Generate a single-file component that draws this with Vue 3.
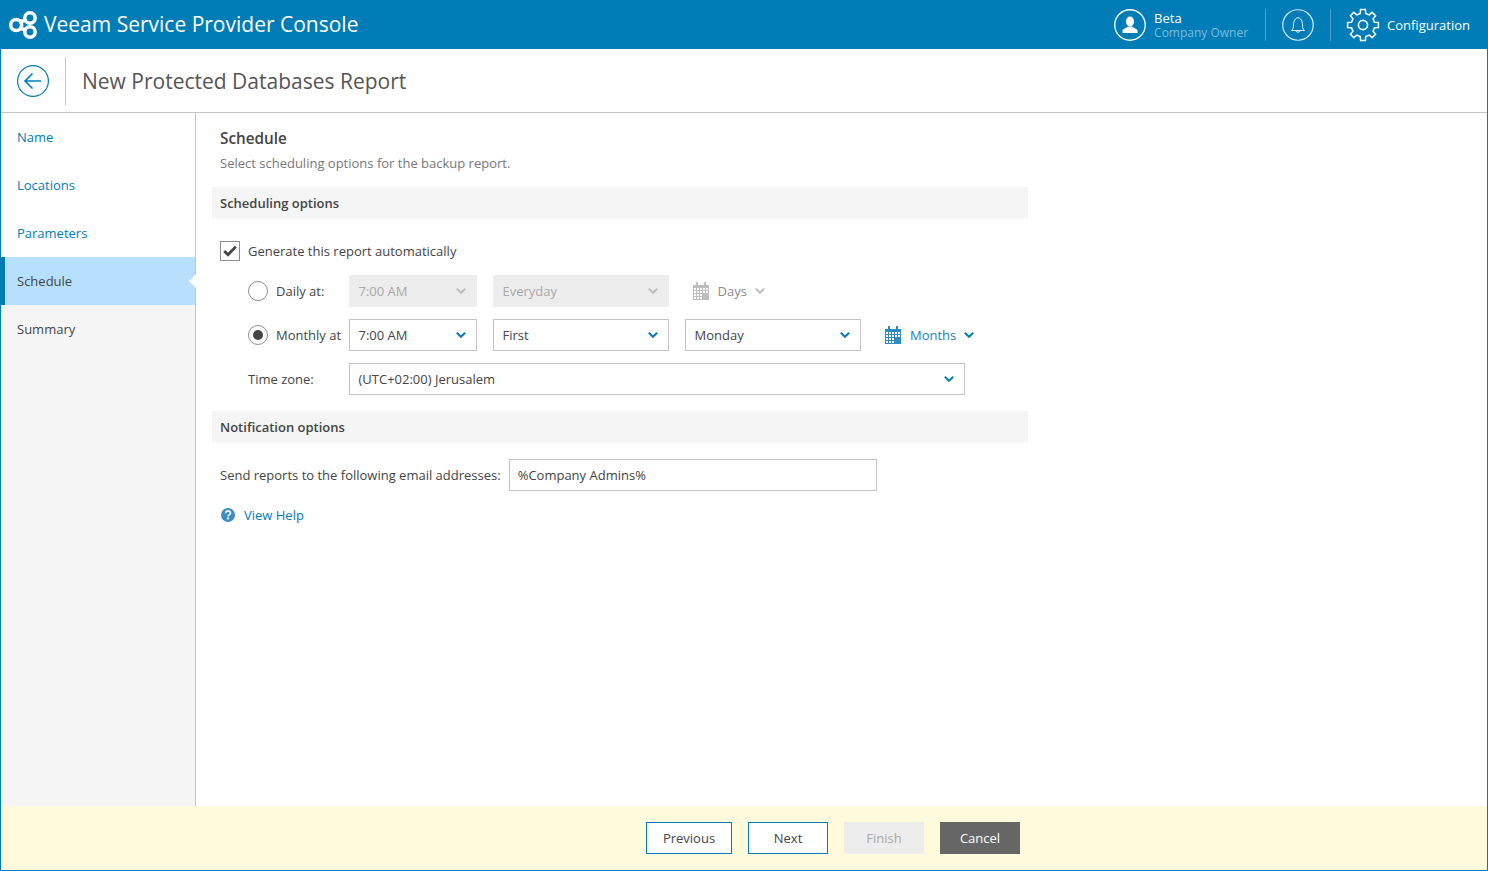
<script setup>
const navItems = [
  { label: 'Name', state: 'link' },
  { label: 'Locations', state: 'link' },
  { label: 'Parameters', state: 'link' },
  { label: 'Schedule', state: 'active' },
  { label: 'Summary', state: 'plain' }
]

function gearPath() {
  const cx = 17, cy = 17, teeth = 8
  const pts = []
  for (let i = 0; i < teeth; i++) {
    const a = (i / teeth) * Math.PI * 2 - Math.PI / 2
    const step = (Math.PI * 2) / teeth
    const list = [
      [11.8, a - step * 0.30],
      [15.6, a - step * 0.20],
      [15.6, a + step * 0.20],
      [11.8, a + step * 0.30]
    ]
    list.forEach(([r, t]) => pts.push(`${(cx + r * Math.cos(t)).toFixed(2)} ${(cy + r * Math.sin(t)).toFixed(2)}`))
  }
  return 'M' + pts.join('L') + 'Z'
}
const gear = gearPath()

const calCells = []
for (let r = 0; r < 4; r++) {
  for (let c = 0; c < 5; c++) calCells.push({ x: 1 + c * 3, y: 6 + r * 3 })
}
</script>

<template>
  <div class="app">
    <header class="topbar">
      <div class="brand">
        <svg class="logo" width="30" height="30" viewBox="0 0 30 30" fill="none" stroke="#fff" stroke-width="3.5">
          <path d="M11 12 L18 10 M11 18 L18 20" stroke-width="3.4" />
          <circle cx="8.2" cy="15" r="5.5" />
          <circle cx="22" cy="8" r="5.2" />
          <circle cx="22" cy="22" r="5.2" />
        </svg>
        <span class="brand-name">Veeam Service Provider Console</span>
      </div>
      <div class="top-actions">
        <svg class="round-ico" width="32" height="32" viewBox="0 0 32 32">
          <circle cx="16" cy="16" r="15.25" fill="none" stroke="#fff" stroke-width="1.3" />
          <ellipse cx="16" cy="12.5" rx="4" ry="5" fill="#fff" />
          <path d="M8.5 24 v-2.2 c0 -2 4 -2.8 5.5 -4.3 h4 c1.5 1.5 5.5 2.3 5.5 4.3 V24 Z" fill="#fff" />
        </svg>
        <div class="user">
          <div class="user-name">Beta</div>
          <div class="user-role">Company Owner</div>
        </div>
        <div class="top-div top-div-a"></div>
        <svg class="round-ico" width="32" height="32" viewBox="0 0 32 32" fill="none" stroke="#fff">
          <circle cx="16" cy="16" r="15.25" stroke-width="1.2" stroke-opacity=".85" />
          <path d="M9.5 21.5 c1.6 -1.5 2 -3 2 -5.5 c0 -4 1.8 -7.2 4.5 -7.2 s4.5 3.2 4.5 7.2 c0 2.5 .4 4 2 5.5 Z" stroke-width="1" stroke-opacity=".9" />
          <path d="M14 22 c.3 1.6 3.7 1.6 4 0" stroke-width="1" stroke-opacity=".9" />
        </svg>
        <div class="top-div top-div-b"></div>
        <svg class="gear" width="34" height="34" viewBox="0 0 34 34" fill="none" stroke="#fff" stroke-width="1.5">
          <path :d="gear" stroke-linejoin="miter" />
          <circle cx="17" cy="17" r="4.6" stroke-width="1.6" />
        </svg>
        <span class="config">Configuration</span>
      </div>
    </header>

    <div class="titlebar">
      <svg width="32" height="32" viewBox="0 0 32 32" fill="none" stroke="#007cb7">
        <circle cx="16" cy="16" r="15.4" stroke-width="1.2" />
        <path d="M8 16 H24 M15.5 8.5 L8 16 L15.5 23.5" stroke-width="1.6" />
      </svg>
      <div class="title-div"></div>
      <h1 class="title">New Protected Databases Report</h1>
    </div>

    <div class="body">
      <nav class="side">
        <div v-for="item in navItems" :key="item.label" class="side-item" :class="item.state">{{ item.label }}</div>
      </nav>

      <main class="main">
        <div class="intro">
          <h2 class="h">Schedule</h2>
          <p class="sub">Select scheduling options for the backup report.</p>
        </div>

        <div class="band">Scheduling options</div>

        <div class="sched">
          <label class="check-row">
            <span class="checkbox">
              <svg width="14" height="12" viewBox="0 0 14 12" fill="none" stroke="#444" stroke-width="2.8"><path d="M1.2 6 L5 9.8 L12.8 1.6" /></svg>
            </span>
            Generate this report automatically
          </label>

          <div class="row">
            <div class="radio-wrap"><span class="radio"></span><span class="lbl">Daily at:</span></div>
            <div class="sel w128 disabled"><span>7:00 AM</span><svg class="chev" width="10" height="6" viewBox="0 0 10 6"><path d="M.8 .8 L5 4.8 L9.2 .8" /></svg></div>
            <div class="sel w176 disabled"><span>Everyday</span><svg class="chev" width="10" height="6" viewBox="0 0 10 6"><path d="M.8 .8 L5 4.8 L9.2 .8" /></svg></div>
            <div class="period off">
              <svg class="cal" width="16" height="18" viewBox="0 0 16 18">
                <path d="M3 0h2v4H3zM11 0h2v4h-2z" /><rect y="3" width="16" height="15" class="cal-bg" />
                <rect v-for="(c, i) in calCells" :key="i" :x="c.x" :y="c.y" width="2" height="2" fill="#fff" />
                <rect x="10" y="12" width="6" height="6" />
              </svg>
              <span>Days</span>
              <svg class="chev" width="10" height="6" viewBox="0 0 10 6"><path d="M.8 .8 L5 4.8 L9.2 .8" /></svg>
            </div>
          </div>

          <div class="row">
            <div class="radio-wrap"><span class="radio on"></span><span class="lbl">Monthly at</span></div>
            <div class="sel w128"><span>7:00 AM</span><svg class="chev" width="10" height="6" viewBox="0 0 10 6"><path d="M.8 .8 L5 4.8 L9.2 .8" /></svg></div>
            <div class="sel w176"><span>First</span><svg class="chev" width="10" height="6" viewBox="0 0 10 6"><path d="M.8 .8 L5 4.8 L9.2 .8" /></svg></div>
            <div class="sel w176"><span>Monday</span><svg class="chev" width="10" height="6" viewBox="0 0 10 6"><path d="M.8 .8 L5 4.8 L9.2 .8" /></svg></div>
            <div class="period">
              <svg class="cal" width="16" height="18" viewBox="0 0 16 18">
                <path d="M3 0h2v4H3zM11 0h2v4h-2z" /><rect y="3" width="16" height="15" class="cal-bg" />
                <rect v-for="(c, i) in calCells" :key="i" :x="c.x" :y="c.y" width="2" height="2" fill="#fff" />
                <rect x="10" y="12" width="6" height="6" />
              </svg>
              <span>Months</span>
              <svg class="chev" width="10" height="6" viewBox="0 0 10 6"><path d="M.8 .8 L5 4.8 L9.2 .8" /></svg>
            </div>
          </div>

          <div class="row">
            <div class="tz-lbl">Time zone:</div>
            <div class="sel w616"><span>(UTC+02:00) Jerusalem</span><svg class="chev" width="10" height="6" viewBox="0 0 10 6"><path d="M.8 .8 L5 4.8 L9.2 .8" /></svg></div>
          </div>
        </div>

        <div class="band">Notification options</div>

        <div class="mail-row">
          <span>Send reports to the following email addresses:</span>
          <div class="inp">%Company Admins%</div>
        </div>

        <div class="help">
          <svg width="16" height="16" viewBox="0 0 16 16">
            <circle cx="8" cy="8" r="7" fill="#3d8fc0" />
            <path d="M5.6 6.2 c0 -3 4.9 -3 4.9 -.2 c0 1.7 -2.4 1.7 -2.4 3.4" fill="none" stroke="#fff" stroke-width="1.6" />
            <rect x="7.1" y="10.5" width="1.9" height="1.9" fill="#fff" />
          </svg>
          <span>View Help</span>
        </div>
      </main>
    </div>

    <footer class="foot">
      <button class="btn">Previous</button>
      <button class="btn w80">Next</button>
      <button class="btn w80 dis">Finish</button>
      <button class="btn w80 dark">Cancel</button>
    </footer>
  </div>
</template>

<style>
html, body { margin: 0; padding: 0; background: #fff; }
</style>

<style scoped>
* { box-sizing: border-box; }
.app {
  width: 1488px; height: 871px; display: flex; flex-direction: column;
  font-family: "Open Sans", "Liberation Sans", sans-serif; font-size: 13px; color: #444;
  border-left: 1px solid #007cb7; border-right: 1px solid #007cb7; border-bottom: 1px solid #007cb7;
  overflow: hidden;
}
.topbar {
  height: 49px; background: #007cb7; color: #fff; display: flex; align-items: center; justify-content: space-between;
  margin: 0 -1px; padding: 0 18px 0 8px; flex: none;
}
.brand { display: flex; align-items: center; }
.logo { margin-right: 6px; margin-top: 1px; }
.brand-name { font-size: 21px; line-height: 30px; margin-bottom: 2px; }
.top-actions { display: flex; align-items: center; height: 100%; }
.round-ico { display: block; }
.user { margin-left: 8px; width: 111px; font-size: 13px; padding-top: 2px; }
.user-name { color: #fff; line-height: 15px; }
.user-role { color: #7fbadb; font-size: 12px; line-height: 14px; }
.top-div { width: 1px; height: 32px; background: #4ba0cc; }
.top-div-a { margin-right: 16px; }
.top-div-b { margin: 0 0 0 16px; }
.gear { margin-left: 15px; }
.config { margin-left: 7px; font-size: 13px; }
.titlebar {
  height: 64px; flex: none; display: flex; align-items: center; padding-left: 16px; border-bottom: 1px solid #c4c4c4;
}
.title-div { width: 1px; height: 48px; background: #c4c4c4; margin: 0 16px 0 16px; }
.title { margin: 0; font-size: 21px; font-weight: 400; color: #555; line-height: 30px; }
.body { flex: 1; display: flex; min-height: 0; }
.side { width: 195px; flex: none; background: #f5f5f5; border-right: 1px solid #c4c4c4; }
.side-item { height: 48px; line-height: 48px; padding-left: 16px; position: relative; background: #fff; }
.side-item.link { color: #007cb7; background: #fff; }
.side-item.plain { background: #f5f5f5; color: #444; }
.side-item.active { background: #b7e0ff; color: #444; padding-left: 12px; border-left: 4px solid #007cb7; }
.side-item.active::after {
  content: ""; position: absolute; right: -1px; top: 17px; width: 0; height: 0;
  border-top: 7px solid transparent; border-bottom: 7px solid transparent; border-right: 7px solid #fff;
}
.main { flex: 1; padding-left: 16px; min-width: 0; }
.intro { padding: 13px 0 0 8px; height: 74px; }
.h { margin: 0; font-size: 15.3px; font-weight: 600; line-height: 24px; color: #444; }
.sub { margin: 0; line-height: 26px; color: #777; }
.band {
  width: 816px; height: 32px; background: #f5f5f5; line-height: 32px; padding-left: 8px; font-weight: 600; color: #444;
}
.sched { padding: 22px 0 16px 8px; display: flex; flex-direction: column; gap: 12px; }
.check-row { display: flex; align-items: center; height: 20px; gap: 8px; margin-bottom: 2px; }
.checkbox {
  width: 20px; height: 20px; border: 1px solid #8d8d8d; display: flex; align-items: center; justify-content: center; background: #fff;
}
.row { display: flex; align-items: center; height: 32px; }
.radio-wrap { margin-left: 28px; width: 101px; display: flex; align-items: center; gap: 8px; flex: none; }
.radio { width: 20px; height: 20px; border-radius: 50%; border: 1px solid #8d8d8d; background: #fff; position: relative; flex: none; }
.radio.on::after {
  content: ""; position: absolute; left: 4px; top: 4px; width: 10px; height: 10px; border-radius: 50%; background: #444;
}
.lbl { white-space: nowrap; }
.tz-lbl { margin-left: 28px; width: 101px; flex: none; }
.sel {
  height: 32px; border: 1px solid #c4c4c4; background: #fff; display: flex; align-items: center; justify-content: space-between;
  padding: 0 10px 0 8.5px; margin-right: 16px; flex: none;
}
.sel.disabled { background: #ededed; border-color: #ededed; color: #a8a8a8; }
.w128 { width: 128px; }
.w176 { width: 176px; }
.w616 { width: 616px; }
.chev { fill: none; stroke: #007cb7; stroke-width: 2; display: block; }
.disabled .chev, .off .chev { stroke: #bdbdbd; }
.period { display: flex; align-items: center; margin-left: 8px; color: #1a80b5; }
.period.off { color: #8a8a8a; }
.period .chev { margin-left: 8px; }
.cal { margin-right: 9px; fill: #2d8cbe; display: block; }
.cal-bg { fill: #2d8cbe; }
.off .cal { fill: #bdbdbd; margin-right: 8.5px; }
.off .cal-bg { fill: #bdbdbd; }
.mail-row { display: flex; align-items: center; gap: 8px; padding: 16px 0 0 8px; }
.inp { width: 368px; height: 32px; border: 1px solid #c4c4c4; padding-left: 8px; line-height: 30px; }
.help { display: flex; align-items: center; gap: 8px; padding: 14px 0 0 8px; color: #007cb7; line-height: 20px; }
.help svg { display: block; }
.foot {
  height: 64px; flex: none; background: #fffadc; display: flex; align-items: center; gap: 16px; padding-left: 645px;
}
.btn {
  width: 86px; height: 32px; border: 1px solid #007cb7; background: #fff; color: #444; font: inherit; padding: 0;
}
.w80 { width: 80px; }
.btn.dis { background: #ededed; border-color: #ededed; color: #a8a8a8; }
.btn.dark { background: #666; border-color: #666; color: #fff; }
</style>
